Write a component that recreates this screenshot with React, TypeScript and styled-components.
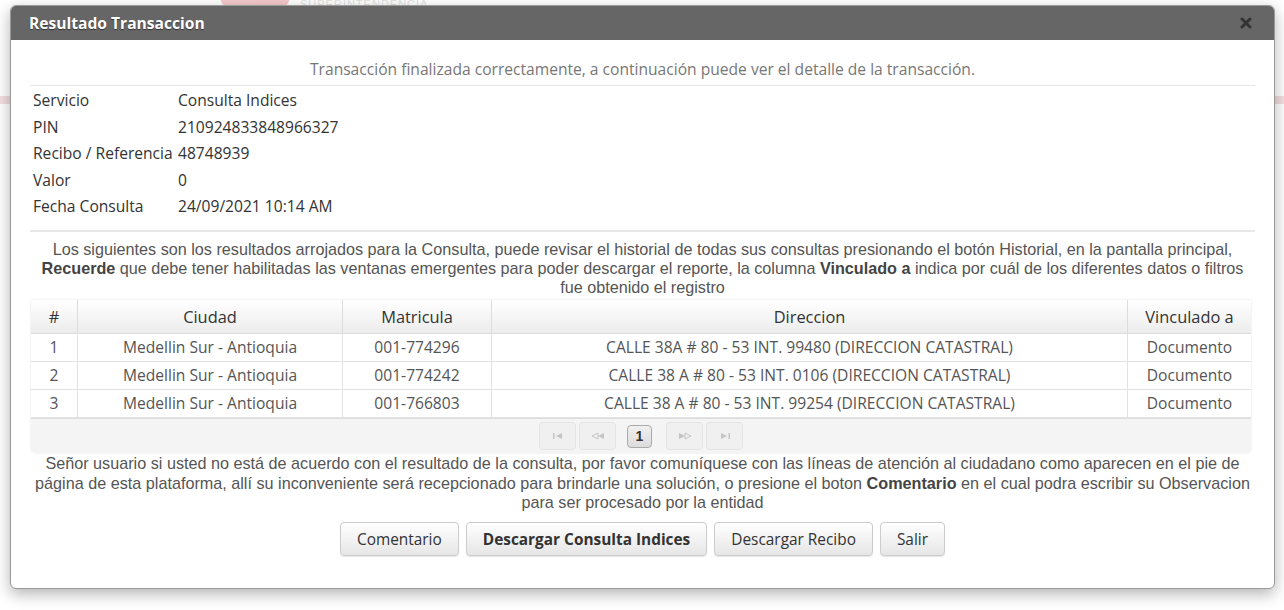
import styled, { createGlobalStyle } from 'styled-components';

const GlobalStyle = createGlobalStyle`
  html, body {
    margin: 0;
    padding: 0;
    background: #ffffff;
    font-family: 'Open Sans', 'Liberation Sans', sans-serif;
  }
`;

type InfoRow = { label: string; value: string };
type ResultRow = {
  n: number;
  ciudad: string;
  matricula: string;
  direccion: string;
  vinculado: string;
};

const info: InfoRow[] = [
  { label: 'Servicio', value: 'Consulta Indices' },
  { label: 'PIN', value: '210924833848966327' },
  { label: 'Recibo / Referencia', value: '48748939' },
  { label: 'Valor', value: '0' },
  { label: 'Fecha Consulta', value: '24/09/2021 10:14 AM' },
];

const rows: ResultRow[] = [
  {
    n: 1,
    ciudad: 'Medellin Sur - Antioquia',
    matricula: '001-774296',
    direccion: 'CALLE 38A # 80 - 53 INT. 99480 (DIRECCION CATASTRAL)',
    vinculado: 'Documento',
  },
  {
    n: 2,
    ciudad: 'Medellin Sur - Antioquia',
    matricula: '001-774242',
    direccion: 'CALLE 38 A # 80 - 53 INT. 0106 (DIRECCION CATASTRAL)',
    vinculado: 'Documento',
  },
  {
    n: 3,
    ciudad: 'Medellin Sur - Antioquia',
    matricula: '001-766803',
    direccion: 'CALLE 38 A # 80 - 53 INT. 99254 (DIRECCION CATASTRAL)',
    vinculado: 'Documento',
  },
];

const Page = styled.div`
  position: relative;
  width: 1284px;
  height: 610px;
  overflow: hidden;
  background: #fff;
`;

const PageHeader = styled.div`
  height: 96px;
  display: flex;
  align-items: flex-start;
  padding-left: 220px;
  gap: 10px;
  opacity: 0.25;
`;

const LogoMark = styled.div`
  width: 70px;
  height: 14px;
  margin-top: -4px;
  background: #d2262f;
  border-radius: 0 0 20px 20px;
`;

const LogoText = styled.div`
  font-family: 'Liberation Sans', sans-serif;
  font-size: 11px;
  line-height: 8px;
  height: 6px;
  overflow: hidden;
  color: #888;
  letter-spacing: 1px;
`;

const PinkBand = styled.div`
  height: 8px;
  background: #f3dde0;
`;

const Dialog = styled.div`
  position: absolute;
  left: 10px;
  top: 5px;
  width: 1263px;
  height: 582px;
  background: #fff;
  border: 1px solid #9a9a9a;
  border-radius: 6px;
  box-shadow: 0 5px 15px rgba(0, 0, 0, 0.3);
  display: flex;
  flex-direction: column;
  overflow: hidden;
`;

const TitleBar = styled.div`
  height: 34px;
  background: #666666;
  display: flex;
  align-items: center;
  justify-content: space-between;
  padding: 0 21px 0 18px;
  flex-shrink: 0;
`;

const Title = styled.div`
  color: #fff;
  font-weight: 700;
  font-size: 15.6px;
  text-shadow: 0 1px 1px rgba(0, 0, 0, 0.5);
`;

const CloseButton = styled.div`
  display: flex;
  align-items: center;
  justify-content: center;
  width: 14px;
  height: 14px;
`;

const Body = styled.div`
  padding: 19px 19px 0 19px;
  display: flex;
  flex-direction: column;
`;

const Message = styled.div`
  text-align: center;
  color: #777;
  font-size: 15.6px;
  line-height: 20px;
  padding-bottom: 6px;
  border-bottom: 1px solid #e5e5e5;
`;

const InfoTable = styled.div`
  display: grid;
  grid-template-columns: 145px 1fr;
  padding: 1px 3px 10px;
  border-bottom: 2px solid #e8e8e8;
`;

const InfoLabel = styled.div`
  font-size: 15.6px;
  line-height: 26.5px;
  color: #333;
`;

const InfoValue = styled.div`
  font-size: 15.6px;
  line-height: 26.5px;
  color: #333;
  font-weight: 500;
`;

const Note = styled.p<{ $top: number }>`
  margin: ${(p) => p.$top}px 0 0;
  font-family: 'Liberation Sans', Arial, sans-serif;
  font-size: 16.2px;
  line-height: 19.3px;
  color: #555;
  text-align: center;

  b {
    color: #444;
  }
`;

const TableWrap = styled.div`
  margin: 3px 4px 0 1px;
  border-radius: 0 0 5px 5px;
  box-shadow: 0 0 2px rgba(0, 0, 0, 0.15);
`;

const Table = styled.table`
  width: 100%;
  border-collapse: collapse;
  table-layout: fixed;
`;

const Th = styled.th<{ $w?: number }>`
  width: ${(p) => (p.$w ? `${p.$w}px` : 'auto')};
  height: 33px;
  padding: 0;
  font-weight: 500;
  font-size: 16.4px;
  color: #333;
  background: linear-gradient(#ffffff, #ececec);
  border: 1px solid #dcdcdc;
  border-top: none;
  &:first-child {
    border-left: none;
  }
  &:last-child {
    border-right: none;
  }
`;

const Td = styled.td`
  height: 27px;
  padding: 0;
  text-align: center;
  font-size: 15.6px;
  line-height: 27px;
  color: #555;
  border: 1px solid #e2e2e2;
  &:first-child {
    border-left: none;
  }
  &:last-child {
    border-right: none;
  }
`;

const Pager = styled.div`
  height: 34px;
  background: #f4f4f4;
  border-top: 1px solid #dddddd;
  border-radius: 0 0 5px 5px;
  display: flex;
  align-items: center;
  justify-content: center;
  gap: 3px;
`;

const PagerButton = styled.div<{ $active?: boolean }>`
  height: ${(p) => (p.$active ? '23px' : '28px')};
  min-width: ${(p) => (p.$active ? '25px' : '37px')};
  margin: ${(p) => (p.$active ? '0 11px 0 8px' : '0')};
  box-sizing: border-box;
  display: flex;
  align-items: center;
  justify-content: center;
  border: 1px solid ${(p) => (p.$active ? '#aaa' : '#e4e4e4')};
  border-radius: 4px;
  background: ${(p) =>
    p.$active ? 'linear-gradient(#f0f0f0, #dcdcdc)' : '#f0f0f0'};
  font-family: 'Liberation Sans', Arial, sans-serif;
  font-size: 14px;
  font-weight: 700;
  color: #333;
`;

const Actions = styled.div`
  display: flex;
  justify-content: center;
  gap: 7px;
  margin-top: 10px;
`;

const ActionButton = styled.button<{ $strong?: boolean }>`
  height: 34px;
  padding: 0 16px;
  font-family: 'Open Sans', sans-serif;
  font-size: 15.4px;
  font-weight: ${(p) => (p.$strong ? 700 : 400)};
  color: #333;
  background: linear-gradient(#ffffff, #e6e6e6);
  border: 1px solid #cccccc;
  border-radius: 4px;
  box-shadow: 0 1px 1px rgba(0, 0, 0, 0.1);
`;

const Glyph = ({ kind }: { kind: 'first' | 'prev' | 'next' | 'last' }) => {
  const c = '#c4c4c4';
  return (
    <svg width="14" height="8" viewBox="0 0 14 8">
      {kind === 'first' && (
        <>
          <rect x="2" y="1" width="1.5" height="6" fill={c} />
          <polygon points="11,1 5,4 11,7" fill={c} />
        </>
      )}
      {kind === 'prev' && (
        <>
          <polygon points="7,1 1,4 7,7" fill="none" stroke={c} />
          <polygon points="13,1 7,4 13,7" fill={c} />
        </>
      )}
      {kind === 'next' && (
        <>
          <polygon points="1,1 7,4 1,7" fill={c} />
          <polygon points="7,1 13,4 7,7" fill="none" stroke={c} />
        </>
      )}
      {kind === 'last' && (
        <>
          <polygon points="3,1 9,4 3,7" fill={c} />
          <rect x="10.5" y="1" width="1.5" height="6" fill={c} />
        </>
      )}
    </svg>
  );
};

const App = () => {
  return (
    <Page>
      <GlobalStyle />
      <PageHeader>
        <LogoMark />
        <LogoText>SUPERINTENDENCIA</LogoText>
      </PageHeader>
      <PinkBand />
      <Dialog>
        <TitleBar>
          <Title>Resultado Transaccion</Title>
          <CloseButton>
            <svg width="12" height="12" viewBox="0 0 12 12">
              <path
                d="M2 2 L10 10 M10 2 L2 10"
                stroke="#333"
                strokeWidth="3"
                strokeLinecap="round"
              />
            </svg>
          </CloseButton>
        </TitleBar>
        <Body>
          <Message>
            Transacción finalizada correctamente, a continuación puede ver el
            detalle de la transacción.
          </Message>
          <InfoTable>
            {info.map((r) => (
              <>
                <InfoLabel key={r.label}>{r.label}</InfoLabel>
                <InfoValue key={r.label + 'v'}>{r.value}</InfoValue>
              </>
            ))}
          </InfoTable>
          <Note $top={8}>
            Los siguientes son los resultados arrojados para la Consulta, puede
            revisar el historial de todas sus consultas presionando el botón
            Historial, en la pantalla principal, <b>Recuerde</b> que debe tener
            habilitadas las ventanas emergentes para poder descargar el reporte,
            la columna <b>Vinculado a</b> indica por cuál de los diferentes
            datos o filtros fue obtenido el registro
          </Note>
          <TableWrap>
            <Table>
              <thead>
                <tr>
                  <Th $w={46}>#</Th>
                  <Th $w={264}>Ciudad</Th>
                  <Th $w={148}>Matricula</Th>
                  <Th>Direccion</Th>
                  <Th $w={123}>Vinculado a</Th>
                </tr>
              </thead>
              <tbody>
                {rows.map((r) => (
                  <tr key={r.n}>
                    <Td>{r.n}</Td>
                    <Td>{r.ciudad}</Td>
                    <Td>{r.matricula}</Td>
                    <Td>{r.direccion}</Td>
                    <Td>{r.vinculado}</Td>
                  </tr>
                ))}
              </tbody>
            </Table>
            <Pager>
              <PagerButton>
                <Glyph kind="first" />
              </PagerButton>
              <PagerButton>
                <Glyph kind="prev" />
              </PagerButton>
              <PagerButton $active>1</PagerButton>
              <PagerButton>
                <Glyph kind="next" />
              </PagerButton>
              <PagerButton>
                <Glyph kind="last" />
              </PagerButton>
            </Pager>
          </TableWrap>
          <Note $top={1}>
            Señor usuario si usted no está de acuerdo con el resultado de la
            consulta, por favor comuníquese con las líneas de atención al
            ciudadano como aparecen en el pie de página de esta plataforma, allí
            su inconveniente será recepcionado para brindarle una solución, o
            presione el boton <b>Comentario</b> en el cual podra escribir su
            Observacion para ser procesado por la entidad
          </Note>
          <Actions>
            <ActionButton>Comentario</ActionButton>
            <ActionButton $strong>Descargar Consulta Indices</ActionButton>
            <ActionButton>Descargar Recibo</ActionButton>
            <ActionButton>Salir</ActionButton>
          </Actions>
        </Body>
      </Dialog>
    </Page>
  );
};

export default App;
